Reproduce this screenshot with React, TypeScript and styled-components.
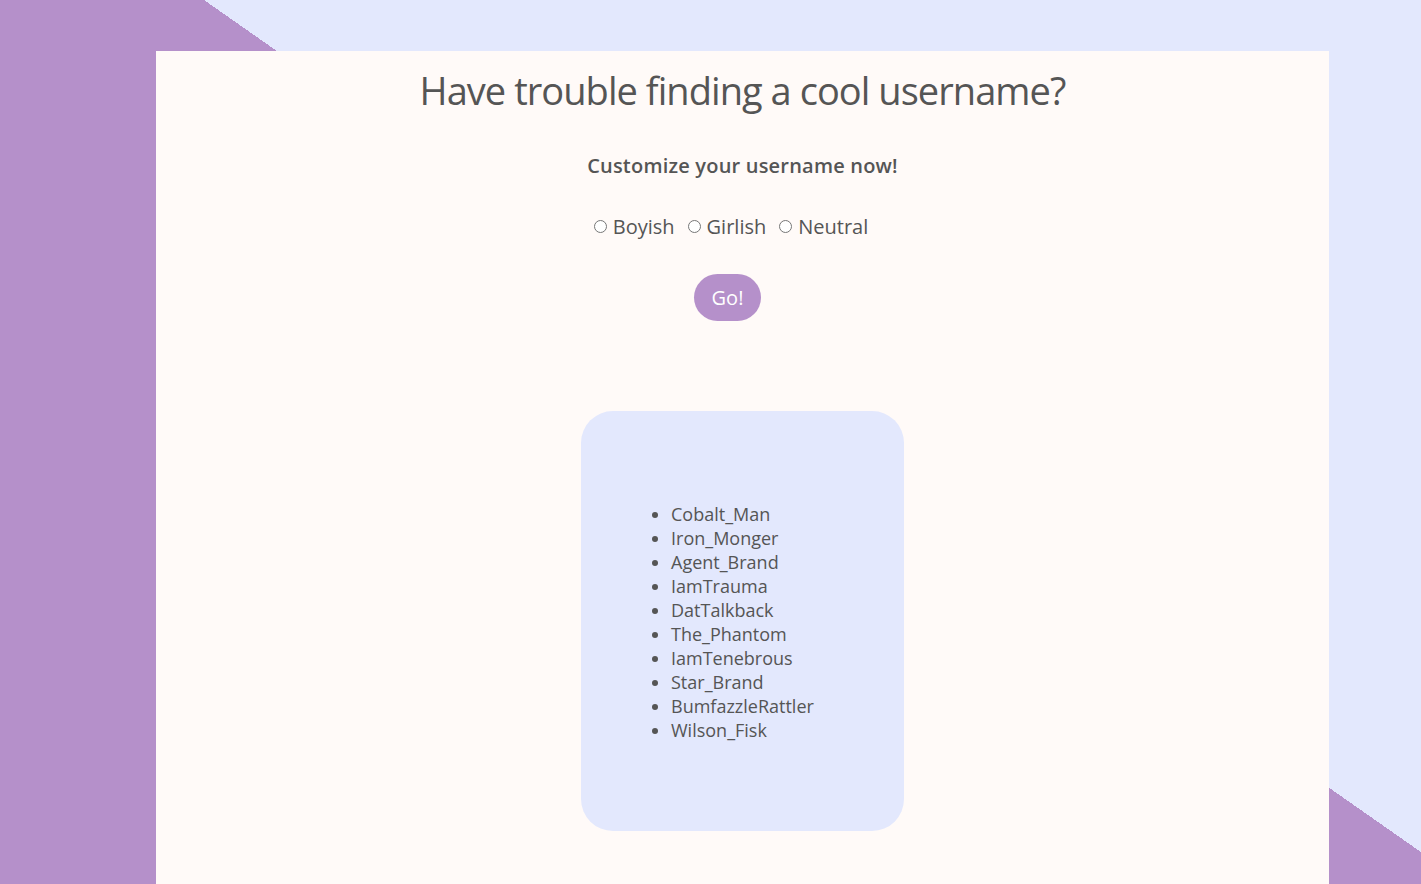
import styled, { createGlobalStyle } from "styled-components"

const GlobalStyle = createGlobalStyle`
  html {
    min-height: 100%;
    background: linear-gradient(35deg, #b590ca 54.65%, #e3e8fd 54.65%) fixed;
  }
  body {
    margin: 0;
    font-family: "Open Sans", "Noto Sans", sans-serif;
    color: #555;
  }
`

const Card = styled.main`
  margin: 51px 0 0 156px;
  width: 1173px;
  min-height: 900px;
  box-sizing: border-box;
  padding-top: 13px;
  background: #fffaf8;
  display: flex;
  flex-direction: column;
  align-items: center;
`
const Title = styled.h1`
  margin: 0;
  font-size: 38px;
  line-height: 52px;
  font-weight: 500;
  letter-spacing: -0.95px;
  color: #555;
`
const Subtitle = styled.h3`
  margin: 36px 0 0;
  font-size: 20px;
  line-height: 27px;
  font-weight: 600;
  letter-spacing: 0.2px;
  color: #555;
`
const Options = styled.div`
  margin-top: 34px;
  padding-right: 23px;
  display: flex;
  gap: 13px;
  font-size: 20px;
  line-height: 27px;
`
const Option = styled.label`
  display: flex;
  align-items: center;
  gap: 6px;
  cursor: pointer;

  input {
    margin: 0;
    width: 13px;
    height: 13px;
  }
`
const GoButton = styled.button`
  margin: 34px 30px 0 0;
  padding: 10px 18px;
  border: none;
  border-radius: 24px;
  background: #b590ca;
  color: #fff;
  font-family: inherit;
  font-size: 20px;
  line-height: 27px;
  cursor: pointer;
`
const ResultBox = styled.section`
  margin-top: 90px;
  width: 323px;
  height: 420px;
  box-sizing: border-box;
  padding: 2px 0 0 50px;
  border-radius: 32px;
  background: #e3e8fd;
  display: flex;
  align-items: center;
`
const Names = styled.ul`
  margin: 0;
  padding-left: 40px;
  font-size: 18px;
  line-height: 24px;
`

const names = [
  "Cobalt_Man",
  "Iron_Monger",
  "Agent_Brand",
  "IamTrauma",
  "DatTalkback",
  "The_Phantom",
  "IamTenebrous",
  "Star_Brand",
  "BumfazzleRattler",
  "Wilson_Fisk",
]

export default function App() {
  return (
    <>
      <GlobalStyle />
      <Card>
        <Title>Have trouble finding a cool username?</Title>
        <Subtitle>Customize your username now!</Subtitle>
        <Options>
          {["Boyish", "Girlish", "Neutral"].map((o) => (
            <Option key={o}>
              <input type="radio" name="style" value={o} />
              {o}
            </Option>
          ))}
        </Options>
        <GoButton>Go!</GoButton>
        <ResultBox>
          <Names>
            {names.map((n) => (
              <li key={n}>{n}</li>
            ))}
          </Names>
        </ResultBox>
      </Card>
    </>
  )
}
